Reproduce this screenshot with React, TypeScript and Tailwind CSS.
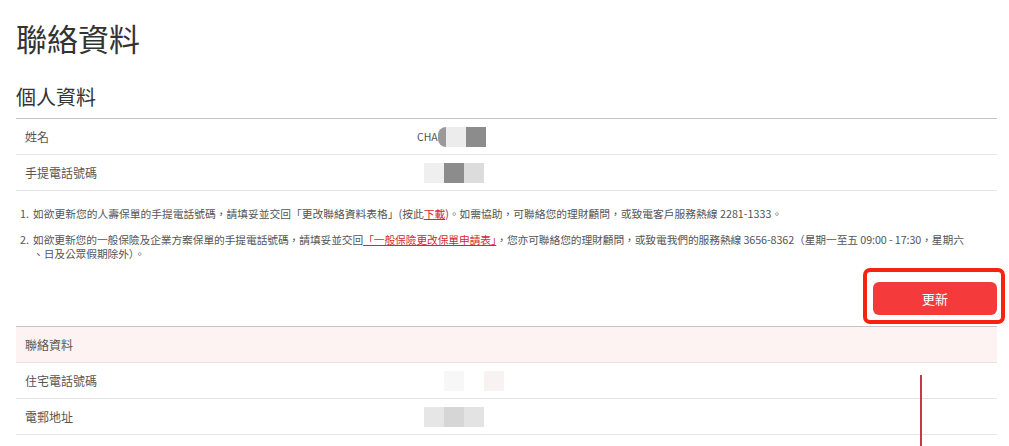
const font = { fontFamily: '"Noto Sans CJK TC", "Noto Sans", sans-serif' }

function Blur({ c, w = 20 }: { c: string; w?: number }) {
  return <span className="block h-[20px]" style={{ background: c, width: w }} />
}

function Row({ label, children, pink }: { label: string; children?: React.ReactNode; pink?: boolean }) {
  return (
    <div className={`flex h-[36px] items-center border-b border-[#e4e4e4] ${pink ? 'bg-[#fdf3f3]' : ''}`}>
      <div className="w-[401px] pl-[9px] text-[12px] text-[#555]">{label}</div>
      <div className="flex items-center">{children}</div>
    </div>
  )
}

export default function App() {
  return (
    <div className="relative h-[446px] w-[1009px] overflow-hidden bg-white pl-[16px] pr-[12px] text-[#333]" style={font}>
      <h1 className="mt-[19px] text-[31px] font-normal leading-[38px] text-[#333]">聯絡資料</h1>
      <h2 className="mt-[26px] text-[20px] leading-[28px] text-[#333]">個人資料</h2>

      <div className="mt-[7px] border-t border-[#c4c4c4]">
        <Row label="姓名">
          <span className="text-[10.5px] text-[#555]">CHA</span>
          <span className="block h-[20px] w-[8px] rounded-l-full bg-[#9a9a9a]" />
          <Blur c="#ececec" />
          <Blur c="#8c8c8c" />
        </Row>
        <Row label="手提電話號碼">
          <span className="ml-[7px]" />
          <Blur c="#efefef" />
          <Blur c="#8c8c8c" />
          <Blur c="#dcdcdc" />
        </Row>
      </div>

      <ol className="mt-[16px] space-y-[12px] pl-[4px] text-[10.75px] leading-[14px] text-[#555]">
        <li className="flex">
          <span className="w-[13px] shrink-0">1.</span>
          <span>
            如欲更新您的人壽保單的手提電話號碼，請填妥並交回「更改聯絡資料表格」(按此
            <span className="text-[#d6282e] underline">下載</span>
            )。如需協助，可聯絡您的理財顧問，或致電客戶服務熱線 2281-1333。
          </span>
        </li>
        <li className="flex">
          <span className="w-[13px] shrink-0">2.</span>
          <div className="tracking-[-0.1px]">
            <div className="whitespace-nowrap">
              如欲更新您的一般保險及企業方案保單的手提電話號碼，請填妥並交回
              <span className="text-[#d6282e] underline">「一般保險更改保單申請表」</span>
              ，您亦可聯絡您的理財顧問，或致電我們的服務熱線 3656-8362（星期一至五 09:00 - 17:30，星期六
            </div>
            <div>、日及公眾假期除外）。</div>
          </div>
        </li>
      </ol>

      <div className="mt-[21px] flex justify-end">
        <div className="relative">
          <button className="h-[33px] w-[124px] rounded-[6px] bg-[#f43a3a] text-[13px] text-white">更新</button>
          <div className="absolute -top-[14px] -bottom-[9px] -left-[10px] -right-[8px] rounded-[7px] border-[4px] border-[#f5230f]" />
        </div>
      </div>

      <div className="mt-[11px] border-t border-[#c4c4c4]">
        <Row label="聯絡資料" pink />
        <Row label="住宅電話號碼">
          <span className="ml-[27px]" />
          <Blur c="#f7f7f7" />
          <Blur c="#ffffff" />
          <Blur c="#f8f2f2" />
        </Row>
        <Row label="電郵地址">
          <span className="ml-[7px]" />
          <Blur c="#e6e6e6" />
          <Blur c="#d6d6d6" />
          <Blur c="#e3e3e3" />
        </Row>
      </div>

      <div className="absolute left-[920px] top-[375px] h-[80px] w-[2px] bg-[#c8364a]" />
    </div>
  )
}
